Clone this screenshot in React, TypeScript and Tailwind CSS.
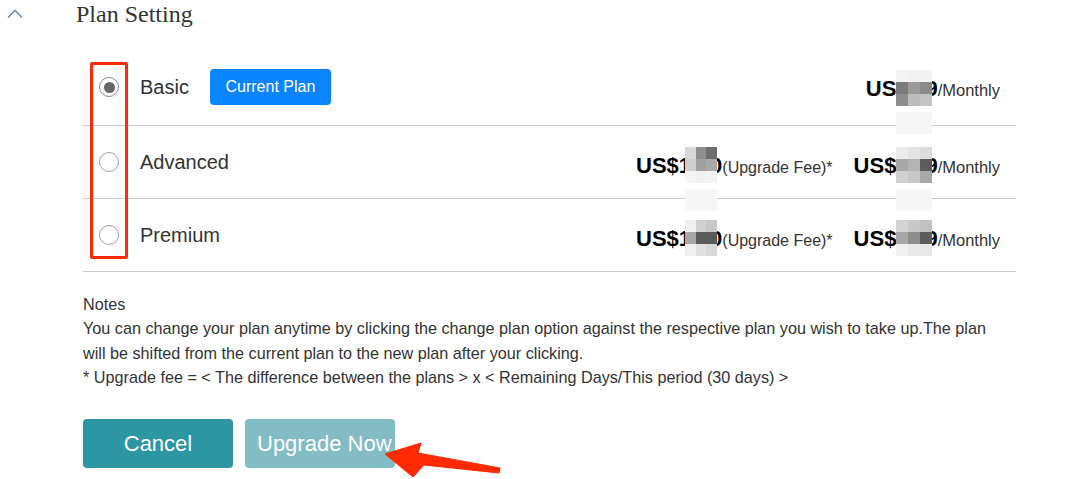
import React from "react";

const sans = { fontFamily: '"Liberation Sans", Arial, Helvetica, sans-serif' };

type MosaicProps = { cells: string[]; faint?: boolean; className?: string };

/* The mosaic lies over the price digits: a zero-height inline slot at the baseline, with the grid drawn over it. */
function Mosaic({ cells, faint, className }: MosaicProps) {
  return (
    <span className={"relative z-10 inline-block h-0 align-baseline " + (className ?? "")}>
      <span className="absolute left-0 top-[-26px] grid w-full grid-cols-3">
        {cells.map((c, i) => (
          <span key={i} className={"block h-[12px] " + c} />
        ))}
      </span>
      {faint && <span className="absolute left-0 top-[16px] block h-[22px] w-full bg-[#f6f6f6]" />}
    </span>
  );
}

function Radio({ checked }: { checked?: boolean }) {
  return (
    <span
      className={
        "flex h-[20px] w-[20px] shrink-0 items-center justify-center rounded-full border bg-white " +
        (checked ? "border-[#8a8a8a]" : "border-[#a0a0a0]")
      }
    >
      {checked && <span className="block h-[11px] w-[11px] rounded-full bg-[#666666]" />}
    </span>
  );
}

const m1 = [
  "bg-[#f3f3f3]", "bg-[#f1f1f1]", "bg-[#f2f2f2]",
  "bg-[#7b7b7b]", "bg-[#9a9a9a]", "bg-[#8b8b8b]",
  "bg-[#8e8e8e]", "bg-[#bcbcbc]", "bg-[#c3c3c3]",
];
const m2l = [
  "bg-[#d8d8d8]", "bg-[#8e8e8e]", "bg-[#6e6e6e]",
  "bg-[#cfcfcf]", "bg-[#a0a0a0]", "bg-[#a8a8a8]",
  "bg-[#f4f4f4]", "bg-[#f0f0f0]", "bg-[#f2f2f2]",
];
const m2r = [
  "bg-[#ececec]", "bg-[#e4e4e4]", "bg-[#dcdcdc]",
  "bg-[#a8a8a8]", "bg-[#b4b4b4]", "bg-[#5d5d5d]",
  "bg-[#d0d0d0]", "bg-[#c8c8c8]", "bg-[#a8a8a8]",
];
const m3l = [
  "bg-[#f0f0f0]", "bg-[#d0d0d0]", "bg-[#c8c8c8]",
  "bg-[#a8a8a8]", "bg-[#5a5a5a]", "bg-[#5a5a5a]",
  "bg-[#f0f0f0]", "bg-[#e0e0e0]", "bg-[#d8d8d8]",
];
const m3r = [
  "bg-[#d4d4d4]", "bg-[#c8c8c8]", "bg-[#c0c0c0]",
  "bg-[#a8a8a8]", "bg-[#8e8e8e]", "bg-[#5c5c5c]",
  "bg-[#f0f0f0]", "bg-[#e8e8e8]", "bg-[#e8e8e8]",
];

function Monthly({ prefix, cells, faint }: { prefix: string; cells: string[]; faint?: boolean }) {
  return (
    <span className="whitespace-nowrap leading-normal">
      <span className="text-[22px] font-bold text-black">{prefix}</span>
      <Mosaic cells={cells} faint={faint} className="mr-[-7px] w-[36px]" />
      <span className="text-[22px] font-bold text-black">9</span>
      <span className="text-[16.5px] text-[#333]">/Monthly</span>
    </span>
  );
}

function Fee({ cells, faint }: { cells: string[]; faint?: boolean }) {
  return (
    <span className="whitespace-nowrap leading-normal">
      <span className="text-[22px] font-bold text-black">US$1</span>
      <Mosaic cells={cells} faint={faint} className="ml-[-6px] mr-[-7px] w-[32px]" />
      <span className="text-[22px] font-bold text-black">0</span>
      <span className="text-[16px] text-[#333]">(Upgrade Fee)*</span>
    </span>
  );
}

export default function App() {
  return (
    <div className="relative h-[479px] w-full overflow-hidden bg-white" style={sans}>
      {/* header */}
      <div className="flex h-[28px] items-center">
        <svg width="16" height="10" viewBox="0 0 16 10" className="ml-[7px]" fill="none">
          <polyline points="1,8.5 8,1.5 15,8.5" stroke="#5a86bf" strokeWidth="1.3" />
        </svg>
        <span
          className="ml-[53px] text-[24px] leading-[28px] text-[#333]"
          style={{ fontFamily: '"Liberation Serif", "Times New Roman", serif' }}
        >
          Plan Setting
        </span>
      </div>

      <div className="ml-[83px] mt-[25px] w-[933px]">
        {/* rows */}
        <div className="flex h-[73px] items-center border-b border-[#cccccc] pb-[4px] pr-[16px]">
          <span className="ml-[16px]">
            <Radio checked />
          </span>
          <span className="ml-[21px] text-[20px] text-[#333]">Basic</span>
          <span className="ml-[21px] flex h-[36px] w-[121px] items-center justify-center rounded-[4px] bg-[#0a84ff] text-[16px] text-white">
            Current Plan
          </span>
          <div className="ml-auto mt-[2px] flex items-center">
            <Monthly prefix="US" cells={m1} faint />
          </div>
        </div>

        <div className="flex h-[73px] items-center border-b border-[#cccccc] pr-[16px]">
          <span className="ml-[16px]">
            <Radio />
          </span>
          <span className="ml-[21px] text-[20px] text-[#333]">Advanced</span>
          <div className="ml-auto mt-[6px] flex items-center gap-[21px]">
            <Fee cells={m2l} faint />
            <Monthly prefix="US$" cells={m2r} faint />
          </div>
        </div>

        <div className="flex h-[73px] items-center border-b border-[#cccccc] pr-[16px]">
          <span className="ml-[16px]">
            <Radio />
          </span>
          <span className="ml-[21px] text-[20px] text-[#333]">Premium</span>
          <div className="ml-auto mt-[6px] flex items-center gap-[21px]">
            <Fee cells={m3l} />
            <Monthly prefix="US$" cells={m3r} />
          </div>
        </div>

        {/* notes */}
        <div className="mt-[20px] whitespace-nowrap text-[16.2px] leading-[24.3px] text-[#333]">
          <div>Notes</div>
          <div>
            You can change your plan anytime by clicking the change plan option against the respective plan you wish to take up.The plan
          </div>
          <div>will be shifted from the current plan to the new plan after your clicking.</div>
          <div>* Upgrade fee = &lt; The difference between the plans &gt; x &lt; Remaining Days/This period (30 days) &gt;</div>
        </div>

        {/* buttons */}
        <div className="mt-[30px] flex gap-[12px]">
          <button className="h-[49px] w-[150px] whitespace-nowrap rounded-[4px] bg-[#2c96a3] px-3 text-center text-[22px] text-white">
            Cancel
          </button>
          <button className="h-[49px] w-[150px] whitespace-nowrap rounded-[4px] bg-[#83bcc3] px-3 text-center text-[22px] text-white">
            Upgrade Now
          </button>
        </div>
      </div>

      {/* red highlight box */}
      <div className="pointer-events-none absolute left-[90px] top-[62px] h-[197px] w-[38px] rounded-[2px] border-[3px] border-[#ff2a0a]" />

      {/* red arrow */}
      <svg className="pointer-events-none absolute left-0 top-0" width="1073" height="479" viewBox="0 0 1073 479">
        <polygon
          points="385,454 421,443 418,453 500,468 499,473 424,465 413,477"
          fill="#ff2a00"
          stroke="#ff2a00"
          strokeWidth="1"
          strokeLinejoin="round"
        />
      </svg>
    </div>
  );
}
